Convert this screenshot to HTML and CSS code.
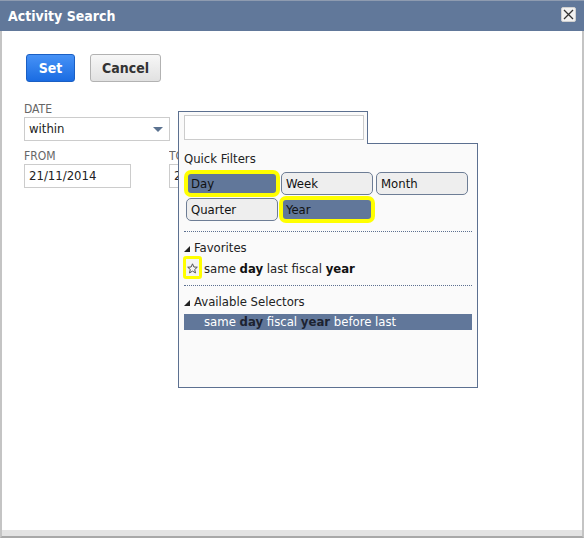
FILE: index.html
```html
<!DOCTYPE html>
<html>
<head>
<meta charset="utf-8">
<link rel="stylesheet" href="styles.css">
</head>
<body>
<div class="dialog">
  <div class="titlebar">
    <span class="title">Activity Search</span>
    <span class="close">
      <svg width="11" height="11" viewBox="0 0 11 11"><path d="M1 1 L10 10 M10 1 L1 10" stroke="#333" stroke-width="1.3" fill="none"/></svg>
    </span>
  </div>
  <div class="body">
    <div class="actions">
      <button class="btn btn-primary">Set</button>
      <button class="btn btn-default">Cancel</button>
    </div>
    <div class="field">
      <div class="label">DATE</div>
      <div class="select">within<span class="arrow"></span></div>
    </div>
    <div class="row">
      <div class="field">
        <div class="label">FROM</div>
        <div class="input from">21/11/2014</div>
      </div>
      <div class="field clipped">
        <div class="label">TO</div>
        <div class="input to">21/11/2014</div>
      </div>
    </div>

    <div class="popup">
      <div class="tab"><div class="search"></div></div>
      <div class="panel">
        <div class="heading">Quick Filters</div>
        <div class="quick">
          <div class="qbtn sel">Day</div>
          <div class="qbtn">Week</div>
          <div class="qbtn">Month</div>
          <div class="qbtn">Quarter</div>
          <div class="qbtn sel">Year</div>
        </div>
        <div class="sep first"></div>
        <div class="group"><span class="tri"></span>Favorites</div>
        <div class="fav">
          <span class="starbox">
            <svg width="11" height="11" viewBox="0 0 11 11"><polygon points="5.5,0.8 6.9,4 10.3,4.2 7.7,6.5 8.5,9.9 5.5,8.1 2.5,9.9 3.3,6.5 0.7,4.2 4.1,4" fill="#f4f4f4" stroke="#555" stroke-width="1"/></svg>
          </span>
          <span class="ftext">same <b>day</b> last fiscal <b>year</b></span>
        </div>
        <div class="sep second"></div>
        <div class="group"><span class="tri"></span>Available Selectors</div>
        <div class="selitem">same <b>day</b> fiscal <b>year</b> before last</div>
      </div>
    </div>
  </div>
  <div class="footer"></div>
</div>
</body>
</html>
```
FILE: styles.css
```css
html, body {
  margin: 0;
  padding: 0;
  background: #c4c4c4;
}
body {
  font-family: "DejaVu Sans Condensed", "DejaVu Sans", sans-serif;
  font-stretch: condensed;
  font-size: 13px;
  color: #222;
}
.dialog {
  width: 584px;
  height: 538px;
  display: flex;
  flex-direction: column;
  box-sizing: border-box;
}
.titlebar {
  height: 31px;
  box-sizing: border-box;
  background: #61789a;
  border-top: 1px solid #8e9bb0;
  display: flex;
  align-items: center;
  justify-content: space-between;
  padding: 0 8px 1px 8px;
}
.title {
  color: #fff;
  font-weight: bold;
  font-size: 14px;
}
.close {
  width: 13px;
  height: 13px;
  background: #f2f2f2;
  border: 1px solid #d0d0d0;
  border-radius: 2px;
  display: flex;
  align-items: center;
  justify-content: center;
  margin-top: -2px;
}
.body {
  flex: 1;
  position: relative;
  background: #fff;
  border-left: 2px solid #c4c4c4;
  border-right: 2px solid #c4c4c4;
  padding: 23px 0 0 22px;
}
.footer {
  height: 8px;
  box-sizing: border-box;
  background: #e3e3e3;
  border-left: 2px solid #c4c4c4;
  border-right: 2px solid #c4c4c4;
  border-bottom: 2px solid #a8a8a8;
}
.actions {
  display: flex;
  gap: 15px;
  padding-left: 2px;
}
.btn {
  height: 28px;
  box-sizing: border-box;
  font-family: inherit;
  font-stretch: condensed;
  font-size: 14px;
  font-weight: bold;
  border-radius: 3px;
  padding: 0;
}
.btn-primary {
  width: 49px;
  color: #fff;
  background: linear-gradient(#4792f6, #1a6ce2);
  border: 1px solid #1a5fc4;
}
.btn-default {
  width: 71px;
  color: #333;
  background: linear-gradient(#f7f7f7, #e1e1e1);
  border: 1px solid #b2b2b2;
}
.field {
  display: flex;
  flex-direction: column;
}
.actions + .field {
  margin-top: 20px;
}
.label {
  font-size: 12px;
  line-height: 14px;
  color: #666;
  margin-bottom: 1px;
  white-space: nowrap;
}
.select {
  width: 146px;
  height: 24px;
  box-sizing: border-box;
  border: 1px solid #ccc;
  padding: 0 0 0 4px;
  line-height: 22px;
  display: flex;
  align-items: center;
  justify-content: space-between;
}
.arrow {
  width: 0;
  height: 0;
  border-left: 5px solid transparent;
  border-right: 5px solid transparent;
  border-top: 5px solid #5b7290;
  margin-right: 6px;
}
.row {
  display: flex;
  gap: 38px;
  margin-top: 8px;
}
.input {
  height: 24px;
  box-sizing: border-box;
  border: 1px solid #ccc;
  padding: 0 0 0 4px;
  line-height: 22px;
  white-space: nowrap;
}
.input.from { width: 107px; }
.clipped {
  width: 10px;
  overflow: hidden;
}
.input.to {
  width: 107px;
  border-right: none;
}

.popup {
  position: absolute;
  left: 176px;
  top: 80px;
  display: flex;
  flex-direction: column;
  align-items: flex-start;
}
.tab {
  position: relative;
  z-index: 1;
  width: 190px;
  height: 33px;
  box-sizing: border-box;
  border: 1px solid #5c7090;
  border-bottom: none;
  background: #fafafa;
  padding: 3px 0 0 5px;
  margin-bottom: -1px;
}
.search {
  width: 180px;
  height: 25px;
  box-sizing: border-box;
  border: 1px solid #ccc;
  background: #fff;
}
.panel {
  width: 300px;
  height: 245px;
  box-sizing: border-box;
  border: 1px solid #5c7090;
  background: #fafafa;
  padding: 7px 5px 0 5px;
}
.heading, .group {
  line-height: 16px;
  color: #222;
}
.quick {
  display: grid;
  grid-template-columns: repeat(3, 92px);
  grid-auto-rows: 23px;
  gap: 3px;
  margin: 5px 0 0 2px;
}
.qbtn {
  box-sizing: border-box;
  border: 1px solid #6d7d95;
  border-radius: 5px;
  background: #eeeeee;
  padding-left: 4px;
  line-height: 21px;
  color: #111;
}
.qbtn.sel {
  background: #61779a;
  border: 2px solid #ffff00;
  box-shadow: 0 0 0 2px #ffff00;
  padding-left: 3px;
  line-height: 19px;
}
.sep {
  border-top: 1px dotted #5c7090;
}
.sep.first {
  margin-top: 10px;
}
.sep.second {
  margin-top: 6px;
}
.group {
  display: flex;
  align-items: center;
  margin-top: 8px;
}
.tri {
  width: 0;
  height: 0;
  border-left: 6px solid transparent;
  border-bottom: 6px solid #222;
  margin: 2px 4px 0 0;
}
.fav {
  display: flex;
  align-items: center;
  gap: 2px;
  margin-left: -1px;
}
.starbox {
  width: 19px;
  height: 23px;
  box-sizing: border-box;
  border: 3px solid #ffff00;
  border-radius: 3px;
  background: #f4f4f4;
  display: flex;
  align-items: center;
  justify-content: center;
  padding-top: 2px;
}
.ftext {
  line-height: 16px;
  padding-top: 3px;
}
.fav b {
  color: #111;
}
.selitem {
  margin-top: 4px;
  background: #61779a;
  color: #fff;
  line-height: 16px;
  height: 16px;
  padding-left: 20px;
}
.selitem b {
  color: #1c2230;
}
```
